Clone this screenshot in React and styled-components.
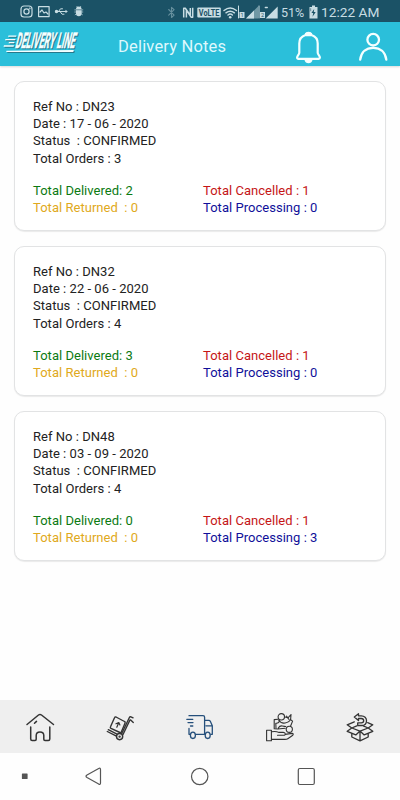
import React from 'react'
import styled, { createGlobalStyle } from 'styled-components'

const GlobalStyle = createGlobalStyle`
    * {
        box-sizing: border-box;
    }
    body {
        margin: 0;
        background-color: #fefefe;
        font-family: Roboto, sans-serif;
    }
    svg {
        display: block;
        flex-shrink: 0;
    }
`
const Container = styled.div`
    width: 400px;
    height: 800px;
    display: flex;
    flex-direction: column;
    overflow: hidden;
`
const StatusBar = styled.div`
    height: 22px;
    padding: 0 20px;
    display: flex;
    align-items: center;
    justify-content: space-between;
    background-color: #1b5266;
    color: #c8dde3;
`
const StatusRight = styled.div`
    display: flex;
    align-items: center;
    padding-top: 2px;
`
const Battery = styled.span`
    width: 28px;
    font-size: 12.5px;
    margin-left: 2px;
`
const Clock = styled.span`
    width: 59px;
    font-size: 13.7px;
    white-space: nowrap;
    margin-left: 3px;
`
const Header = styled.div`
    height: 44px;
    display: flex;
    align-items: center;
    background-color: #2bbfda;
    box-shadow: 0 1px 2px rgba(0, 0, 0, 0.15);
`
const Title = styled.h1`
    flex: 1;
    margin: 4px 0 0 18px;
    color: #dff8fd;
    font-size: 16.5px;
    font-weight: 400;
    letter-spacing: 0.18px;
`
const Actions = styled.div`
    display: flex;
    align-items: center;
    gap: 36px;
    padding: 5px 12px 0 0;
    color: #f4ffff;
`
const List = styled.div`
    flex: 1;
    display: flex;
    flex-direction: column;
    gap: 15px;
    padding: 15px 14px 0;
`
const Card = styled.div`
    height: 150px;
    padding: 15.5px 18px;
    border: 1px solid #e2e3e4;
    border-radius: 10px;
    background-color: #fff;
    box-shadow: 0 1px 1px rgba(0, 0, 0, 0.08);
`
const Line = styled.div`
    height: 17.4px;
    line-height: 17.4px;
    font-size: 13px;
    letter-spacing: 0.03px;
    white-space: pre;
    color: ${props => props.$color || '#222'};
`
const Totals = styled.div`
    display: grid;
    grid-template-columns: 170px 1fr;
    margin-top: 14.5px;
`
const TabBar = styled.div`
    height: 53px;
    display: grid;
    grid-template-columns: repeat(5, 80px);
    background-color: #efefef;
`
const Tab = styled.div`
    display: flex;
    align-items: center;
    justify-content: center;
    color: ${props => props.$active ? '#254f7b' : '#333'};
`
const SystemBar = styled.div`
    height: 47px;
    display: flex;
    background-color: #fefefe;
    color: #555;
`

const notes = [
    { ref: 'DN23', date: '17 - 06 - 2020', orders: 3, delivered: 2, cancelled: 1, returned: 0, processing: 0 },
    { ref: 'DN32', date: '22 - 06 - 2020', orders: 4, delivered: 3, cancelled: 1, returned: 0, processing: 0 },
    { ref: 'DN48', date: '03 - 09 - 2020', orders: 4, delivered: 0, cancelled: 1, returned: 0, processing: 3 },
]

const Icon = ({ width = 32, height = 32, stroke = 1.2, box, children }) => (
    <svg width={width} height={height} viewBox={box || `0 0 ${width} ${height}`} fill="none"
        stroke="currentColor" strokeWidth={stroke} strokeLinecap="round" strokeLinejoin="round">
        {children}
    </svg>
)

const Notifications = () => (
    <Icon width={68} height={22} box="20 0 68 22">
        <rect x="21" y="6" width="11" height="11" rx="3" />
        <circle cx="26.5" cy="11.5" r="2.6" />
        <circle cx="29.7" cy="8.4" r="0.3" />
        <rect x="38.6" y="6.6" width="10.5" height="10" />
        <path d="M40 12l2-2 2 3 2-1 2 2" />
        <path d="M56 11.5h10M58.5 11.5l2-2.7h2M60 11.5l2 2.7h2" strokeWidth="1" />
        <circle cx="56.5" cy="11.5" r="1.1" fill="currentColor" />
        <path d="M65.5 9.8l2.3 1.7-2.3 1.7z" fill="currentColor" stroke="none" />
        <path d="M76 9.3a2.8 2.8 0 0 1 5.6 0zM76 10.2h5.6v3.2a2.8 2.8 0 0 1-5.6 0z" fill="currentColor" stroke="none" />
        <path d="M76.8 6.3l.8.9M80.8 6.3l-.8.9M74.8 9.9h8M74.8 12h8M75.2 14.7l1.5-1.2M82.4 14.7l-1.5-1.2" strokeWidth=".7" />
    </Icon>
)

const Signals = () => (
    <Icon width={112} height={20} box="168 1 112 20">
        <path d="M169.7 8.5l5.4 5.6-2.6 2.4V6.3l2.6 2.3-5.4 5.6" stroke="#668f9d" strokeWidth="1.1" />
        <path d="M184.7 16.5V7.2h1.6l5 7V7M193.7 6.8v9.4h-1.6l-4.7-7v7.3" strokeWidth="1.5" strokeLinecap="butt" />
        <rect x="198.3" y="6.5" width="23.5" height="10" rx="1" fill="currentColor" stroke="none" />
        <text x="199.8" y="14.8" fontSize="8.5" fontWeight="700" fill="#1b5266" stroke="none" textLength="20.5" lengthAdjust="spacingAndGlyphs">VoLTE</text>
        <path d="M225 9.5q6.2-5 12.4 0M227 11.8q4.2-3.3 8.4 0M229 14q2.2-1.8 4.4 0" strokeWidth="1.5" />
        <circle cx="231.2" cy="16.2" r="1.3" fill="currentColor" stroke="none" />
        <path d="M239.5 5v12M260 5v12" strokeWidth="1" />
        <rect x="240.5" y="11" width="5" height="6" fill="currentColor" stroke="none" />
        <text x="241.6" y="16.2" fontSize="5.5" fill="#1b5266" stroke="none">1</text>
        <path d="M259 5.5v12h-12z" fill="#6f98a4" stroke="none" />
        <path d="M255 9.5v8h-8z" fill="currentColor" stroke="none" />
        <rect x="261" y="11" width="5" height="6" fill="currentColor" stroke="none" />
        <text x="262" y="16.2" fontSize="5.5" fill="#1b5266" stroke="none">2</text>
        <path d="M278.7 5.5v12h-12z" fill="currentColor" stroke="none" />
        <path d="M266.3 6.5h2" strokeWidth="1.3" />
    </Icon>
)

const BatteryIcon = () => (
    <Icon width={9} height={14} stroke={0}>
        <path d="M3 .5h3V2h2.5v11.5h-8V2H3z" fill="currentColor" />
        <path d="M5.2 4L2.4 8h1.8l-.7 3.8L6.7 7H4.8z" fill="#1b5266" />
        <path d="M.5 3.2h1.7v3H.5z" fill="#7c9ca8" />
    </Icon>
)

const Logo = () => (
    <svg width="100" height="44" viewBox="0 22 100 44">
        {[['#27788b', 1], ['#f5ffff', 0]].map(([color, shift]) => (
            <g key={color} transform={`translate(${shift} ${shift})`} fill={color}>
                <path d="M8.5 35.5h8l-.4 1.2H8zM5.5 39h10l-.4 1.3H5zM9 42h5.5l-.4 1.2H8.5zM4 45.3h10l-.4 1.4H3.5zM6.5 50.8L73.8 50l-.5 2H6.2z" />
                <text transform="translate(14.8 48.3) skewX(-14) scale(0.404 1)" fontSize="21.5" fontWeight="700"
                    stroke={color} strokeWidth=".5">DELIVERY LINE</text>
            </g>
        ))}
    </svg>
)

const Bell = () => (
    <Icon width={27} height={34} stroke={2.2}>
        <path d="M10.5 5a3.2 3.2 0 0 1 6 0c4 1.3 6.2 4.6 6.2 8.5v9.3c0 1.7 2.2 3 2.2 4.7 0 .8-.5 1.3-1.3 1.3H3.4c-.8 0-1.3-.5-1.3-1.3 0-1.7 2.2-3 2.2-4.7v-9.3C4.3 9.6 6.5 6.3 10.5 5z" />
        <path d="M10.8 3.9q2.7-2.2 5.4 0v1.6h-5.4zM10.3 30a3.3 3.3 0 0 0 6.4 0z" fill="currentColor" strokeWidth="1.5" />
    </Icon>
)

const Person = () => (
    <Icon width={30} height={30} stroke={2.3}>
        <circle cx="15.2" cy="7.7" r="5.8" />
        <path d="M2.2 27.7C3.2 20.2 8 15.8 15.2 15.8S27.3 20.2 28.3 27.7" />
    </Icon>
)

const Home = () => (
    <Icon stroke={1.5}>
        <path d="M3 13.5L14.5 4q1.5-1.2 3 0L29.5 13.5M6.7 16V28q0 1.5 1.5 1.5h2.8q1.2 0 1.2-1.2V24.5q0-3.5 3.8-3.5t3.8 3.5v3.8q0 1.2 1.2 1.2h3.3q1.5 0 1.5-1.5V16M10.5 12.3l2-1.9" />
    </Icon>
)

const Trolley = () => (
    <Icon stroke={1.4}>
        <path d="M12 6l8.5 4.5q1 .5.6 1.5l-3.8 9q-.4 1-1.4.5L7 17.3q-1-.5-.5-1.5l4-9q.5-1.2 1.5-.8z" />
        <path d="M12.8 16.2l2-4.7M12 12.8l2.8-1.3 1.1 2.5" strokeWidth="1.2" />
        <path d="M3.3 20.5l9.2 4.7M4.3 18.7l8.7 4.4M17.7 22.5l7.7-16q.5-1 1.5-.7l2.2 1M19 23.5l7-14.5M26.7 9l2.6 2.4" strokeWidth="1.4" />
        <circle cx="15.6" cy="25.6" r="3.1" />
        <circle cx="15.6" cy="25.6" r=".5" />
    </Icon>
)

const Truck = () => (
    <Icon stroke={1.3}>
        <path d="M5 4.7h14q1.6 0 1.6 1.6v17H11.5M2.8 8.3h6M4 11.6h5M6.5 15h2.3M5 17.5v5.8h1.3M20.6 9.3h4.2q1 0 1.5 1l2 4.5v8.5h-1.5M22 14.8h6" />
        <ellipse cx="8.9" cy="24.3" rx="2.5" ry="3.2" />
        <ellipse cx="23.7" cy="24.3" rx="2.5" ry="3.2" />
    </Icon>
)

const HandCoins = () => (
    <Icon stroke={1.1}>
        <rect x="2.6" y="19.3" width="4.8" height="10.4" />
        <path d="M7.6 20.7c3-.5 5-.6 7 .7h4.7q2 .2 2 1.6t-2 1.3h-5.8M21.2 23.4l6.8-1q2 .2.8 1.8l-5 3.5q-1 .7-3 .7H7.6" />
        <path d="M14 8.3l-3.8.3v9.2l3.6.2 7.4-.8M12 17l-.2-4.8q3.2.3 3.8-2.7M14.3 17q1.5-2.5 4-2t3.5.5M21 6l3 .8 3-3.3-.4 5.3 2 1.3-2 4.9" />
        <circle cx="17.3" cy="5.8" r="3.2" />
        <circle cx="25.3" cy="18.3" r="3.1" />
        <path d="M14.6 9q2.5 3.8 6.5 3 4.5-.9 5.5-3.6M22.5 5.2l2.5 3.3" />
    </Icon>
)

const BoxReturn = () => (
    <Icon stroke={1.3}>
        <path d="M14.5 2.7L10.3 6l4.2 3.5V7.5h2.8q2.4.2 2.4 2.2t-2.4 2.1h-3.6v2.7h4c3 0 4.8-2 4.8-4.8s-2-4.9-5.2-4.9h-2.8z" />
        <path d="M10.3 10.8L3.2 13.8 7.8 17l-4.6 3.3 8.6 3.6 4.2-3.8 4.2 3.8 8.6-3.6-4.6-3.3 4.6-3.2-5.1-2.2M7.8 17l8.2 3.1 8.2-3.1M7.8 17l5-2.1M24.2 17l-5-2.1M7.8 22.5V26l8.2 3.8 8.2-3.8v-3.5M16 20.3v9.5" />
    </Icon>
)

const App = () => {
    return (
        <Container>
            <GlobalStyle />
            <StatusBar>
                <Notifications />
                <StatusRight>
                    <Signals />
                    <Battery>51%</Battery>
                    <BatteryIcon />
                    <Clock>12:22 AM</Clock>
                </StatusRight>
            </StatusBar>
            <Header>
                <Logo />
                <Title>Delivery Notes</Title>
                <Actions>
                    <Bell />
                    <Person />
                </Actions>
            </Header>
            <List>
                {notes.map(note => (
                    <Card key={note.ref}>
                        <Line>Ref No : {note.ref}</Line>
                        <Line>Date : {note.date}</Line>
                        <Line>{'Status  : CONFIRMED'}</Line>
                        <Line>Total Orders : {note.orders}</Line>
                        <Totals>
                            <Line $color="#0c7a12">Total Delivered: {note.delivered}</Line>
                            <Line $color="#c51616">Total Cancelled : {note.cancelled}</Line>
                            <Line $color="#dfa920">{'Total Returned  : '}{note.returned}</Line>
                            <Line $color="#10109a">Total Processing : {note.processing}</Line>
                        </Totals>
                    </Card>
                ))}
            </List>
            <TabBar>
                <Tab><Home /></Tab>
                <Tab><Trolley /></Tab>
                <Tab $active><Truck /></Tab>
                <Tab><HandCoins /></Tab>
                <Tab><BoxReturn /></Tab>
            </TabBar>
            <SystemBar>
                <Icon width={400} height={47} stroke={1.2}>
                    <rect x="22.5" y="21" width="4.5" height="4.5" fill="currentColor" />
                    <path d="M87 22q-2 1.3 0 2.6l11.7 6.5q1.8.8 1.8-1V16.5q0-2-1.8-1z" />
                    <circle cx="199.7" cy="23.5" r="8.2" />
                    <rect x="298.3" y="15.5" width="16" height="16" rx="1.5" />
                </Icon>
            </SystemBar>
        </Container>
    )
}

export default App
